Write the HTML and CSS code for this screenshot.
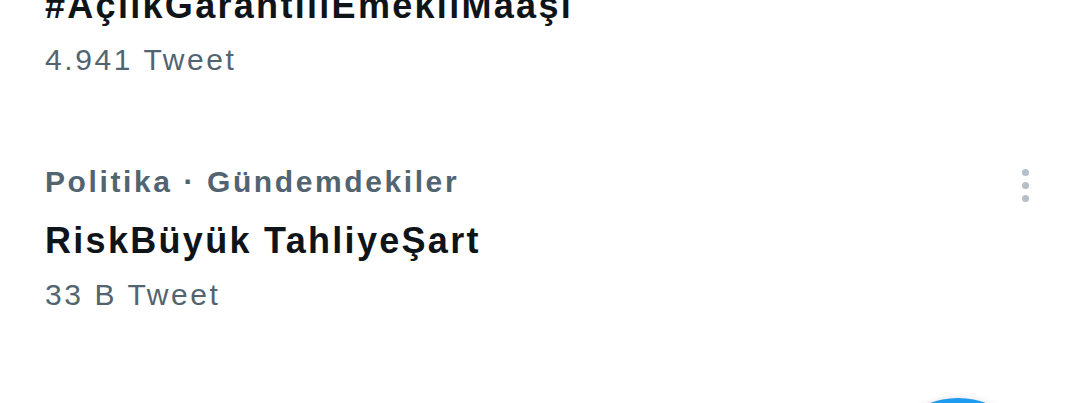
FILE: index.html
```html
<!DOCTYPE html>
<html lang="tr">
<head>
<meta charset="utf-8">
<title>Gündem</title>
<link rel="stylesheet" href="styles.css">
</head>
<body>
<div class="list">
  <div class="trend">
    <div class="trend-body">
      <div class="trend-cat">Gündemdekiler</div>
      <div class="trend-title">#AçlıkGarantiliEmekliMaaşı</div>
      <div class="trend-count">4.941 Tweet</div>
    </div>
    <div class="trend-more">
      <svg width="7" height="33" viewBox="0 0 7 33"><circle cx="3.5" cy="3.5" r="3.5"/><circle cx="3.5" cy="16.5" r="3.5"/><circle cx="3.5" cy="29.5" r="3.5"/></svg>
    </div>
  </div>
  <div class="trend">
    <div class="trend-body">
      <div class="trend-cat">Politika · Gündemdekiler</div>
      <div class="trend-title">RiskBüyük TahliyeŞart</div>
      <div class="trend-count">33 B Tweet</div>
    </div>
    <div class="trend-more">
      <svg width="7" height="33" viewBox="0 0 7 33"><circle cx="3.5" cy="3.5" r="3.5"/><circle cx="3.5" cy="16.5" r="3.5"/><circle cx="3.5" cy="29.5" r="3.5"/></svg>
    </div>
  </div>
</div>
<button class="fab" aria-label="Tweetle"></button>
</body>
</html>
```

FILE: styles.css
```css
html, body {
  margin: 0;
  padding: 0;
  background: #ffffff;
}
body {
  width: 1080px;
  height: 403px;
  overflow: hidden;
  position: relative;
  font-family: "Liberation Sans", Arial, sans-serif;
}
.list {
  margin-top: -114px;
  display: flex;
  flex-direction: column;
}
.trend {
  display: flex;
  align-items: flex-start;
  padding: 41px 51px 41px 45px;
}
.trend-body {
  flex: 1;
  display: flex;
  flex-direction: column;
}
.trend-cat {
  font-size: 30px;
  line-height: 40px;
  font-weight: 700;
  color: #536471;
  letter-spacing: 2.6px;
}
.trend-title {
  margin-top: 15px;
  font-size: 36px;
  line-height: 48px;
  font-weight: 700;
  color: #0f1419;
  letter-spacing: 2.3px;
}
.trend-count {
  margin-top: 10px;
  font-size: 30px;
  line-height: 40px;
  color: #536471;
  letter-spacing: 2.6px;
}
.trend-more {
  margin-top: 7px;
  display: flex;
}
.trend-more svg {
  fill: #b3c0c9;
}
.fab {
  position: absolute;
  left: 878px;
  top: 398px;
  width: 160px;
  height: 160px;
  border: none;
  border-radius: 50%;
  background: #1d9bf0;
  box-shadow: 0 0 6px rgba(0, 0, 0, 0.12);
  padding: 0;
}
```
